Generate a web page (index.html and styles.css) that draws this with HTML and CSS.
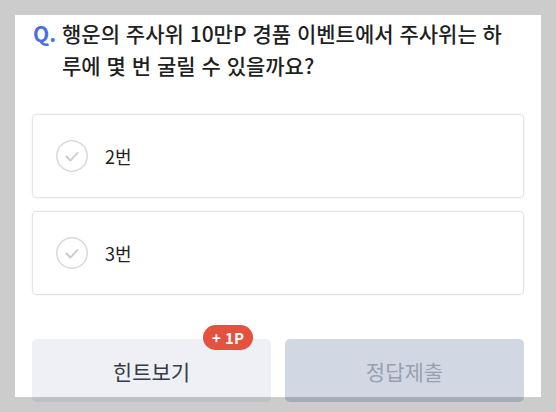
FILE: index.html
```html
<!DOCTYPE html>
<html lang="ko">
<head>
<meta charset="utf-8">
<link rel="stylesheet" href="styles.css">
</head>
<body>
<main class="quiz">
  <div class="question">
    <span class="q-mark">Q.</span>
    <p class="q-text">행운의 주사위 10만P 경품 이벤트에서 주사위는 하루에 몇 번 굴릴 수 있을까요?</p>
  </div>
  <ul class="options">
    <li class="option">
      <svg class="check" viewBox="0 0 32 32" width="32" height="32"><circle cx="16" cy="16" r="15.25" fill="none" stroke="#d9d9d9" stroke-width="1.5"/><polyline points="10.5,16.5 14.5,20.5 21.5,13" fill="none" stroke="#c9c9c9" stroke-width="1.8" stroke-linecap="round" stroke-linejoin="round"/></svg>
      <span class="opt-label">2번</span>
    </li>
    <li class="option">
      <svg class="check" viewBox="0 0 32 32" width="32" height="32"><circle cx="16" cy="16" r="15.25" fill="none" stroke="#d9d9d9" stroke-width="1.5"/><polyline points="10.5,16.5 14.5,20.5 21.5,13" fill="none" stroke="#c9c9c9" stroke-width="1.8" stroke-linecap="round" stroke-linejoin="round"/></svg>
      <span class="opt-label">3번</span>
    </li>
  </ul>
  <div class="actions">
    <button class="btn btn-hint">힌트보기<span class="badge">+ 1P</span></button>
    <button class="btn btn-submit" disabled>정답제출</button>
  </div>
</main>
<div class="frame"></div>
</body>
</html>
```
FILE: styles.css
```css
* { box-sizing: border-box; }
html, body { margin: 0; padding: 0; }
body {
  width: 556px;
  height: 412px;
  overflow: hidden;
  background: #ffffff;
  font-family: "Noto Sans CJK KR", "Noto Sans", sans-serif;
  color: #222222;
}
.quiz {
  padding: 17px 32px 0 32px;
  display: flex;
  flex-direction: column;
}
.question {
  display: flex;
  align-items: flex-start;
  padding-left: 1px;
}
.q-mark {
  width: 29px;
  flex: none;
  font-size: 21px;
  line-height: 32px;
  font-weight: 700;
  color: #4a6fdf;
}
.q-text {
  margin: 0;
  width: 448px;
  font-size: 21px;
  line-height: 32px;
  font-weight: 500;
  color: #1f1f1f;
}
.options {
  list-style: none;
  margin: 33px 0 0 0;
  padding: 0;
  display: flex;
  flex-direction: column;
  gap: 13px;
}
.option {
  height: 84px;
  border: 1px solid #e3e3e3;
  border-radius: 4px;
  box-shadow: 0 0 2px rgba(0,0,0,0.08);
  display: flex;
  align-items: center;
  padding-left: 23px;
  gap: 17px;
}
.check { flex: none; display: block; }
.opt-label {
  font-size: 18px;
  color: #222222;
}
.actions {
  margin-top: 44px;
  display: flex;
  gap: 14px;
}
.btn {
  position: relative;
  flex: 1;
  height: 63px;
  border: none;
  border-radius: 5px;
  font-family: inherit;
  font-size: 21px;
  font-weight: 400;
  padding: 0;
}
.btn-hint {
  background: #eef0f5;
  color: #363b46;
}
.btn-submit {
  background: #d1d8e3;
  color: #98a1ae;
}
.badge {
  position: absolute;
  top: -14px;
  right: 18px;
  width: 50px;
  height: 25px;
  border-radius: 13px;
  background: #e4513f;
  color: #ffffff;
  font-size: 15px;
  font-weight: 700;
  line-height: 25px;
  text-align: center;
}
.frame {
  position: fixed;
  left: 0;
  top: 0;
  width: 556px;
  height: 412px;
  border: 15px solid rgba(0,0,0,0.2);
  pointer-events: none;
}
```
